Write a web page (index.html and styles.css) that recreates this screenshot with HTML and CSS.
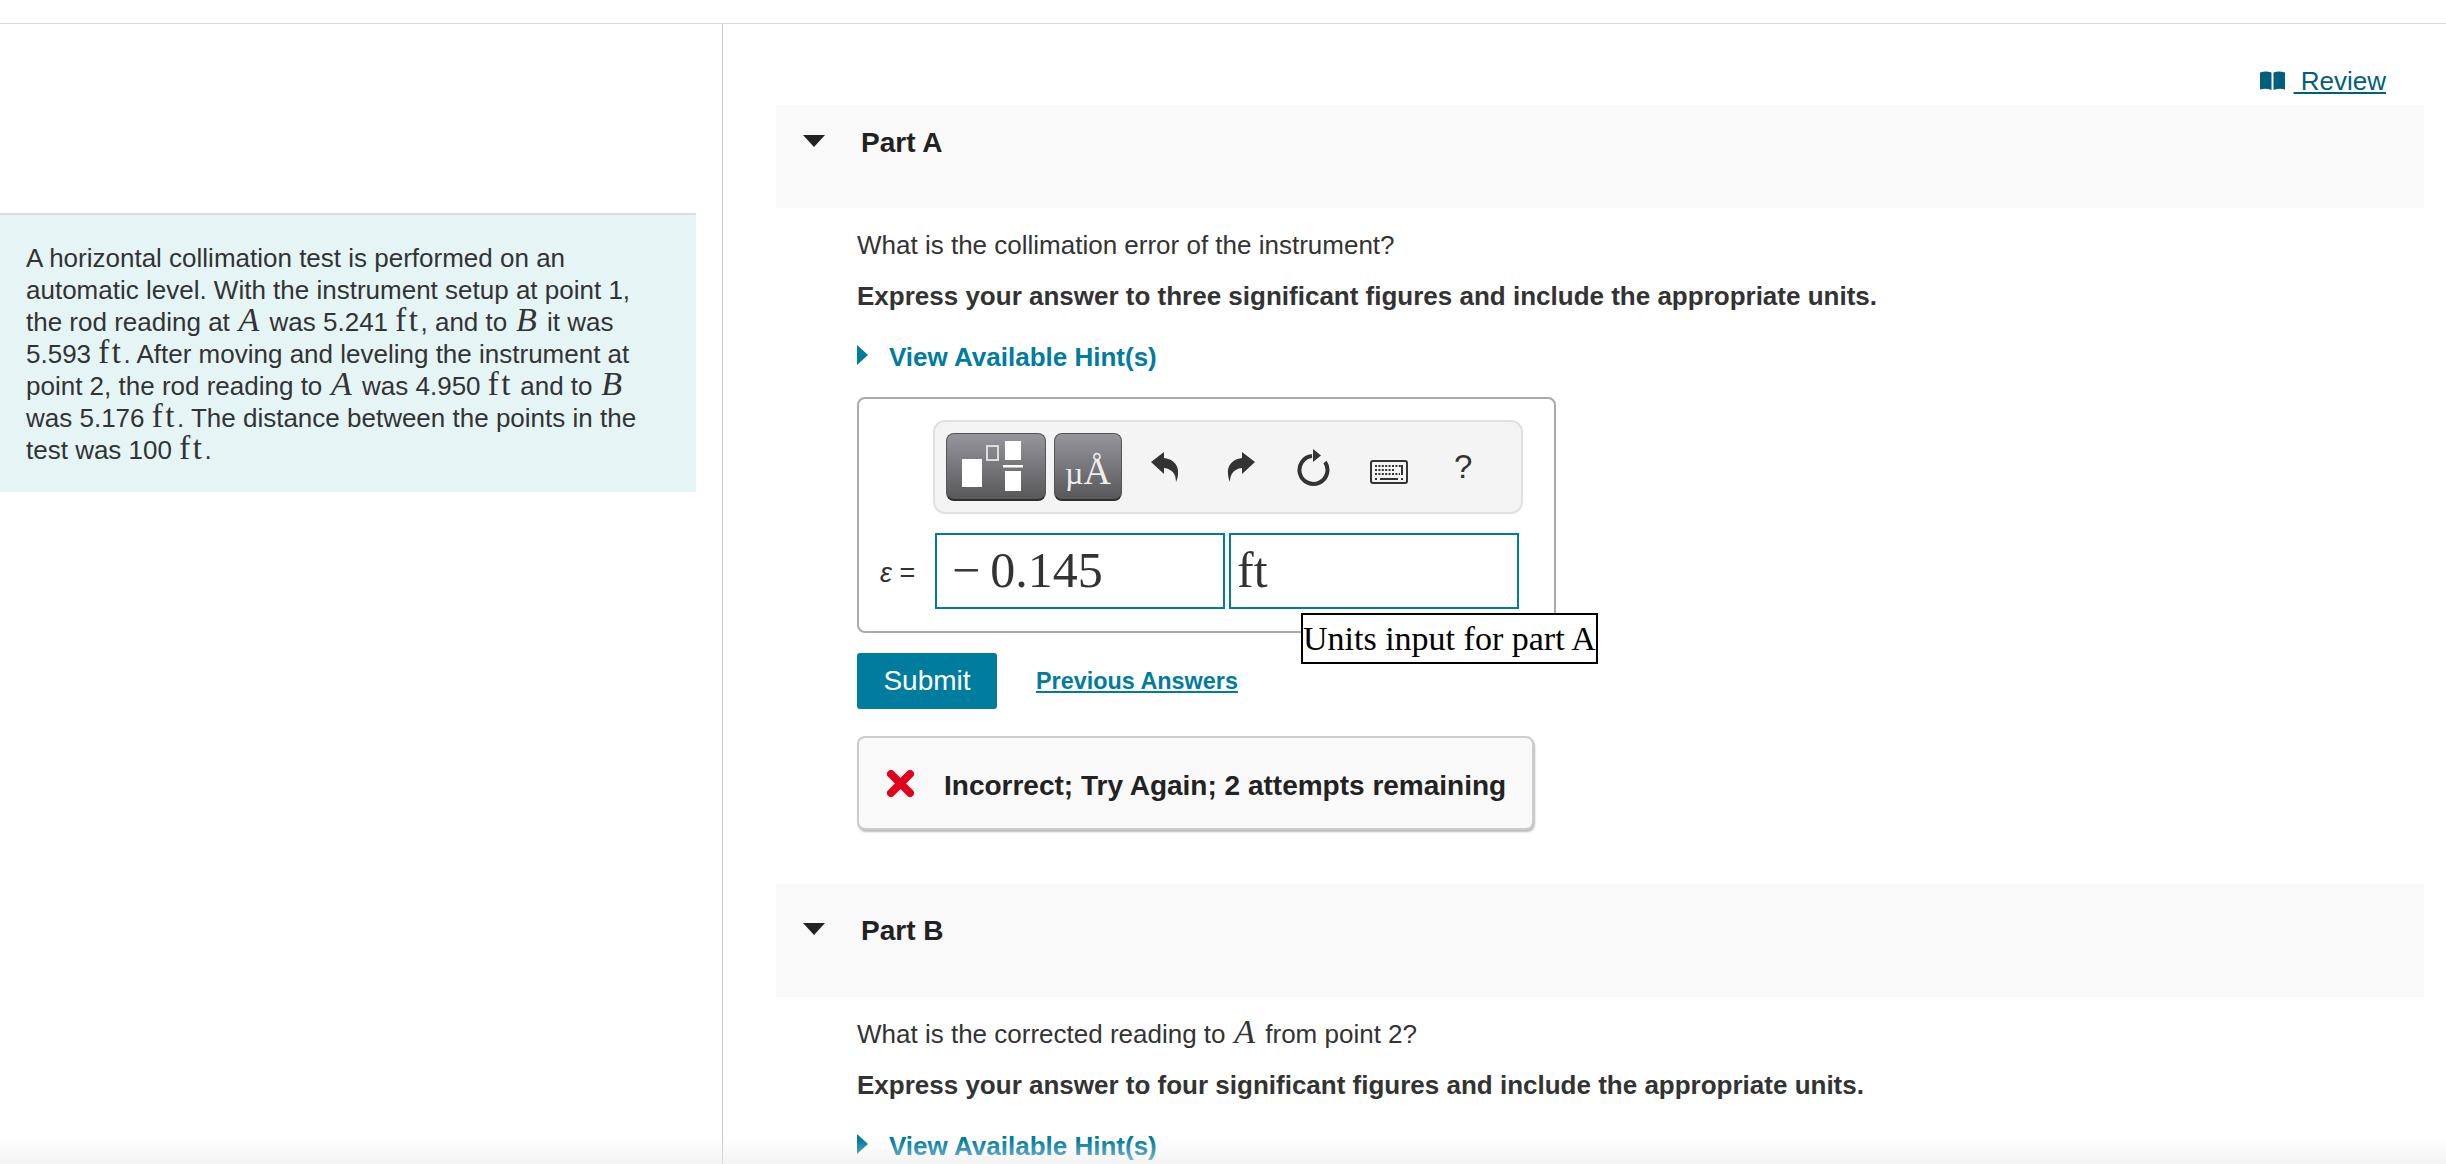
FILE: index.html
```html
<!DOCTYPE html>
<html lang="en">
<head>
    <meta charset="UTF-8">
    <title>Horizontal collimation test</title>
    <link rel="stylesheet" href="styles.css">
</head>
<body>
<div class="topbar"></div>
<div class="page">
    <div class="intro-col">
        <div class="intro">
            A horizontal collimation test is performed on an automatic level. With the instrument setup at point 1, the rod reading at <i class="mvar">A</i> was 5.241 <span class="unit">ft</span>, and to <i class="mvar">B</i> it was 5.593 <span class="unit">ft</span>. After moving and leveling the instrument at point 2, the rod reading to <i class="mvar">A</i> was 4.950 <span class="unit">ft</span> and to <i class="mvar">B</i> was 5.176 <span class="unit">ft</span>. The distance between the points in the test was 100 <span class="unit">ft</span>.
        </div>
    </div>

    <div class="parts-col">
        <div class="review-row">
            <svg class="book" viewBox="0 0 25 19"><path d="M0 1.500 Q6 -.5 11.500 1.500 V19 Q6 17 0 18.500 Z M13.500 1.500 Q19 -.5 25 1.500 V18.500 Q19 17 13.500 19 Z"/></svg>
            <a class="review-link" href="#">&nbsp;Review</a>
        </div>

        <div class="part-head part-head-a">
            <span class="caret-down"></span>
            <span class="part-title">Part A</span>
        </div>
        <div class="part-body">
            <p class="question">What is the collimation error of the instrument?</p>
            <p class="instruction">Express your answer to three significant figures and include the appropriate units.</p>
            <a class="hint" href="#"><span class="caret-right"></span>View Available Hint(s)</a>

            <div class="answer-box">
                <div class="toolbar">
                    <div class="tool-btn tool-btn-wide">
                        <svg width="100" height="68" viewBox="0 0 100 68">
                            <rect x="16" y="26" width="20" height="28" fill="#fff"/>
                            <rect x="41" y="13" width="11" height="14" fill="none" stroke="#ddd" stroke-width="2"/>
                            <rect x="59" y="8" width="16" height="19" fill="#fff"/>
                            <rect x="57" y="32" width="20" height="2.500" fill="#fff"/>
                            <rect x="59" y="38" width="16" height="20" fill="#fff"/>
                        </svg>
                    </div>
                    <div class="tool-btn tool-btn-unit"><span class="unit-mu">µ</span>Å</div>
                    <svg class="tool-icon icon-undo" width="28" height="30" viewBox="0 0 28 30"><path d="M0 10 L13 0 V6 C23 7 28 14 27 22 C26.800 25 26 28 25 30 C25 23 22 17 13 16 V22 Z" fill="#333"/></svg>
                    <svg class="tool-icon icon-redo" width="28" height="30" viewBox="0 0 28 30"><path d="M28 10 L15 0 V6 C5 7 0 14 1 22 C1.200 25 2 28 3 30 C3 23 6 17 15 16 V22 Z" fill="#333"/></svg>
                    <svg class="tool-icon icon-reset" width="34" height="37" viewBox="0 0 34 37"><path d="M28 13 A14 14 0 1 1 15 7" fill="none" stroke="#333" stroke-width="4"/><path d="M16 0 L24 6.500 L16 13 Z" fill="#333"/></svg>
                    <svg class="tool-icon icon-keys" width="38" height="24" viewBox="0 0 38 24">
                        <rect x="1" y="1" width="36" height="22" rx="2" fill="none" stroke="#333" stroke-width="2"/>
                        <path d="M5 6 H31 M5 10 H25 M5 14 H30" stroke="#333" stroke-width="2" stroke-dasharray="2 1.400" fill="none"/>
                        <path d="M32 5 V15" stroke="#333" stroke-width="2"/>
                        <path d="M10 19 H28" stroke="#333" stroke-width="2"/>
                        <path d="M5 19 H7 M31 19 H33" stroke="#333" stroke-width="2"/>
                    </svg>
                    <span class="tool-help">?</span>
                </div>
                <div class="input-row">
                    <span class="input-label"><i>ε</i> =</span>
                    <div class="math-input">&minus;&#8201;0.145</div>
                    <div class="math-input math-input-units">ft</div>
                </div>
                <div class="units-tip">Units input for part A</div>
            </div>

            <div class="submit-row">
                <button class="submit-btn" type="button">Submit</button>
                <a class="prev-answers" href="#">Previous Answers</a>
            </div>

            <div class="feedback">
                <svg class="x-mark" width="27" height="27" viewBox="0 0 27 27"><path d="M4 4 L23 23 M23 4 L4 23" stroke="#e2001a" stroke-width="8" stroke-linecap="round"/></svg>
                <span class="feedback-text">Incorrect; Try Again; 2 attempts remaining</span>
            </div>
        </div>

        <div class="part-head part-head-b">
            <span class="caret-down"></span>
            <span class="part-title">Part B</span>
        </div>
        <div class="part-body">
            <p class="question">What is the corrected reading to <i class="mvar">A</i> from point 2?</p>
            <p class="instruction">Express your answer to four significant figures and include the appropriate units.</p>
            <a class="hint" href="#"><span class="caret-right"></span>View Available Hint(s)</a>
        </div>
    </div>
</div>
<div class="bottom-fade"></div>
</body>
</html>
```

FILE: styles.css
```css
html, body {
    margin: 0;
    height: 1164px;
    overflow: hidden;
    background: #fff;
}
body {
    position: relative;
    font-family: "Liberation Sans", Arial, sans-serif;
    font-size: 26px;
    line-height: 32px;
    color: #333;
}
.topbar {
    height: 23px;
    border-bottom: 1px solid #d9d9d9;
}
.page {
    display: flex;
    height: 1140px;
}

/* left column */
.intro-col {
    width: 722px;
    flex: none;
    border-right: 1px solid #c9c9c9;
    padding-top: 189px;
}
.intro {
    width: 696px;
    box-sizing: border-box;
    padding: 27px 40px 26px 26px;
    background: #e5f5f6;
    border-top: 2px solid #ddd;
}
.mvar {
    font-family: "Liberation Serif", "Times New Roman", serif;
    font-size: 34px;
    font-style: italic;
    line-height: 20px;
    margin: 0 3px 0 1.500px;
}
.unit {
    font-family: "Liberation Serif", "Times New Roman", serif;
    font-size: 33px;
    letter-spacing: 2.500px;
    line-height: 20px;
}

/* right column */
.parts-col {
    flex: 1;
    min-width: 0;
    padding: 0 22px 0 53px;
}
.review-row {
    height: 81px;
    display: flex;
    justify-content: flex-end;
    align-items: flex-start;
    padding: 47px 38px 0 0;
    box-sizing: border-box;
}
.book {
    width: 25px;
    height: 19px;
    fill: #005f7a;
    flex: none;
}
.review-link {
    color: #005f7a;
    font-size: 26px;
    line-height: 30px;
    margin-left: 9px;
    margin-top: -5px;
}
.part-head {
    background: #f9f9f9;
    display: flex;
    align-items: flex-start;
    box-sizing: border-box;
}
.part-head-a {
    height: 103px;
    padding: 22px 0 0 27px;
}
.part-head-b {
    height: 113px;
    margin-top: 54px;
    padding: 31px 0 0 27px;
}
.caret-down {
    width: 0;
    height: 0;
    margin-top: 8px;
    border-left: 11px solid transparent;
    border-right: 11px solid transparent;
    border-top: 12px solid #222;
}
.part-title {
    margin-left: 36px;
    font-size: 28px;
    font-weight: bold;
    color: #222;
}
.part-body {
    padding: 21px 0 0 81px;
}
.question {
    margin: 0 0 19px;
}
.instruction {
    margin: 0 0 29px;
    font-weight: bold;
}
.hint {
    display: flex;
    align-items: center;
    color: #007c9e;
    font-weight: bold;
    text-decoration: none;
}
.caret-right {
    width: 0;
    height: 0;
    margin: -5px 21px 0 0;
    border-top: 10px solid transparent;
    border-bottom: 10px solid transparent;
    border-left: 11px solid #007c9e;
}

/* answer box */
.answer-box {
    position: relative;
    width: 699px;
    height: 236px;
    box-sizing: border-box;
    margin-top: 24px;
    border: 2px solid #aaa;
    border-radius: 8px;
    padding: 21px 0 0 74px;
}
.toolbar {
    width: 590px;
    height: 94px;
    box-sizing: border-box;
    display: flex;
    align-items: flex-start;
    background: #f4f4f4;
    border: 2px solid #e0e0e0;
    border-radius: 12px;
    padding: 11px 0 0 11px;
}
.tool-btn {
    height: 68px;
    box-sizing: border-box;
    background: linear-gradient(#96959c, #58585a);
    border: 1px solid #555;
    border-bottom: 2px solid #2e2e2e;
    border-radius: 8px;
    color: #fff;
    overflow: hidden;
}
.tool-btn-wide {
    width: 100px;
}
.tool-btn-wide svg {
    display: block;
    margin: -1px;
}
.tool-btn-unit {
    width: 68px;
    margin-left: 8px;
    font-family: "Liberation Serif", "Times New Roman", serif;
    font-size: 38px;
    line-height: 74px;
    text-align: center;
    color: #eee;
}
.unit-mu {
    font-size: 32px;
}
.tool-icon {
    flex: none;
}
.icon-undo {
    margin: 19px 0 0 29px;
}
.icon-redo {
    margin: 19px 0 0 48px;
}
.icon-reset {
    margin: 16px 0 0 42px;
}
.icon-keys {
    margin: 27px 0 0 39px;
}
.tool-help {
    margin: 14px 0 0 46px;
    font-size: 33px;
    line-height: 40px;
}
.input-row {
    display: flex;
    align-items: center;
    margin: 19px 0 0 -74px;
}
.input-label {
    width: 76px;
    box-sizing: border-box;
    padding: 3px 0 0 21px;
    font-size: 27px;
    white-space: nowrap;
}
.math-input {
    width: 290px;
    height: 76px;
    box-sizing: border-box;
    border: 2px solid #007c9e;
    padding-left: 15px;
    font-family: "Liberation Serif", "Times New Roman", serif;
    font-size: 50px;
    line-height: 70px;
    color: #333;
}
.math-input-units {
    margin-left: 4px;
    padding-left: 6px;
}
.units-tip {
    position: absolute;
    left: 442px;
    top: 214px;
    border: 2px solid #000;
    background: #fff;
    color: #000;
    font-family: "Liberation Serif", "Times New Roman", serif;
    font-size: 34px;
    line-height: 47px;
    white-space: nowrap;
}

/* submit + feedback */
.submit-row {
    display: flex;
    align-items: center;
    margin-top: 20px;
}
.submit-btn {
    width: 140px;
    height: 56px;
    border: none;
    border-radius: 3px;
    background: #007c9e;
    color: #fff;
    font-family: "Liberation Sans", Arial, sans-serif;
    font-size: 28px;
    padding: 0;
}
.prev-answers {
    margin-left: 39px;
    color: #007c9e;
    font-size: 23.400px;
    font-weight: bold;
}
.feedback {
    width: 677px;
    height: 94px;
    box-sizing: border-box;
    margin-top: 27px;
    display: flex;
    align-items: center;
    background: #f9f9f9;
    border: 2px solid #ccc;
    border-radius: 8px;
    box-shadow: 1px 2px 2px #bbb;
    padding-left: 28px;
}
.feedback-text {
    margin-left: 30px;
    padding-top: 5px;
    font-size: 28px;
    font-weight: bold;
    color: #222;
    white-space: nowrap;
}
.bottom-fade {
    position: absolute;
    left: 0;
    right: 0;
    bottom: 0;
    height: 24px;
    background: linear-gradient(rgba(235,235,235,0), rgba(235,235,235,.6));
    pointer-events: none;
}
```
